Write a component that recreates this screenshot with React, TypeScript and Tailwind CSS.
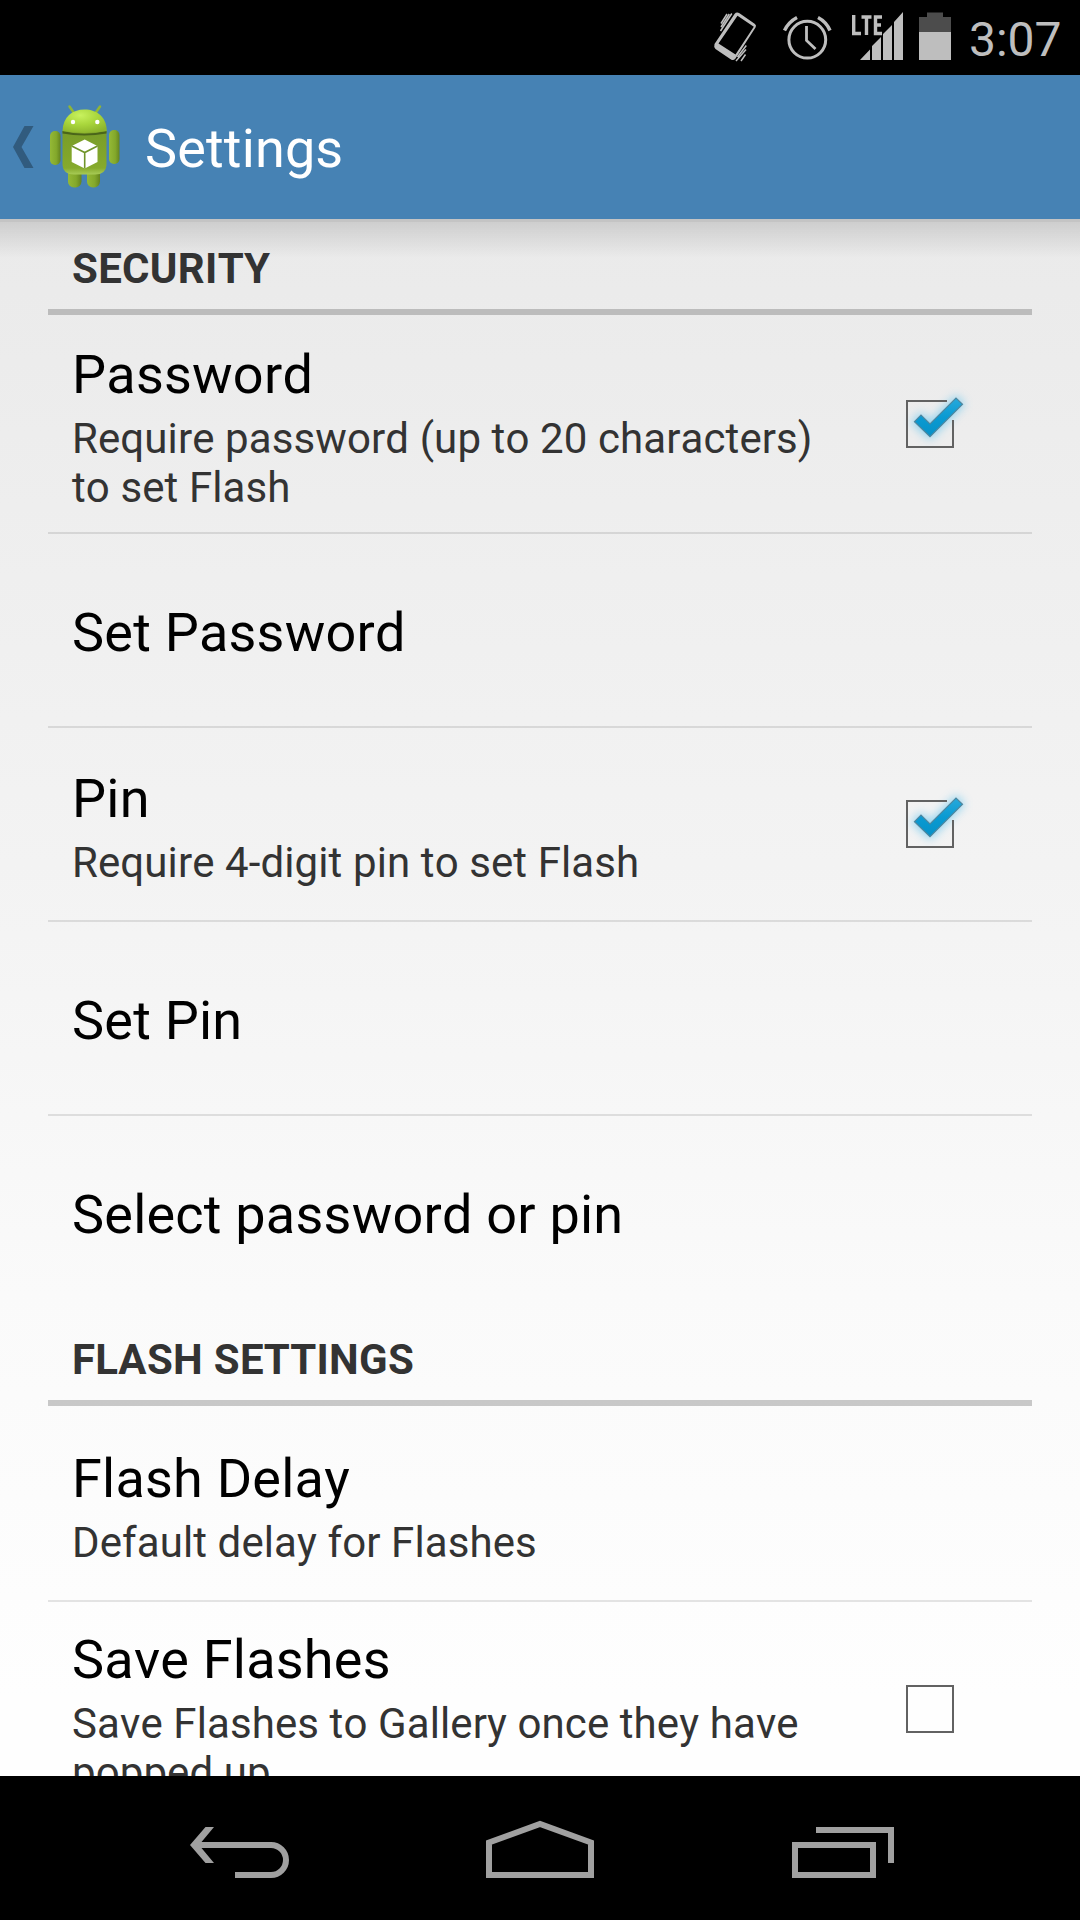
import React from 'react';

function StatusBar() {
  return (
    <div className="flex h-[75px] shrink-0 items-start bg-black text-[#bebebe]">
      <svg className="ml-[700px] h-[75px] w-[260px] shrink-0" viewBox="700 0 260 75" fill="none" stroke="#bebebe">
        <path
          d="M739.500 13.200L755 24Q756.800 25.500 755.500 27.500L735.500 58.500Q733.500 61 731 59.500L715.500 49Q713.500 47 714.500 44L734.500 14Q736.500 11.500 739.500 13.200ZM737.500 15.800L718.500 43.500L735.500 54.500L753.800 26.800Z"
          fill="#bebebe"
          fillRule="evenodd"
          stroke="none"
        />
        <path d="M721 23.500L727 14M720.500 31L731.800 13.500M721 27L729.300 14M737.500 57L746.300 45.500M736 61L746 49.500M741 61L745.500 54.500" strokeWidth="1.500" />
        <circle cx="807.300" cy="39.700" r="18.400" strokeWidth="3" />
        <path d="M784.500 30.500Q788.500 22 797 17.500M818 17.500Q826.500 22 830 30.500" strokeWidth="3.400" />
        <path d="M806.500 26V40.500L815.500 49" strokeWidth="2.800" />
        <path d="M860 60L870 49.500V60ZM872 60V46L881 37V60ZM883 60V34L892 25V60ZM894 60V22L903 12V60Z" fill="#bebebe" stroke="none" />
        <path d="M853.700 15V33.500H861M861.500 17H871.500M866.500 17V35M882 17H875.500V33.500H882M875.500 25H881" strokeWidth="3.400" />
        <path d="M919 32V17H927V12.500H943V17H951V32Z" fill="#4c4c4c" stroke="none" />
        <path d="M919 32H951V60H919Z" fill="#bebebe" stroke="none" />
      </svg>
      <span className="ml-[9px] mt-[12px] text-[48px] leading-[56px]">3:07</span>
    </div>
  );
}

function AndroidLogo() {
  return (
    <svg className="h-[90px] w-[80px]" viewBox="45 100 80 90">
      <defs>
        <radialGradient id="head" cx="0.4" cy="0.25" r="0.8">
          <stop offset="0" stopColor="#c8f25e" />
          <stop offset="0.5" stopColor="#a9d63c" />
          <stop offset="1" stopColor="#8cb32c" />
        </radialGradient>
        <linearGradient id="torso" x1="0" y1="0" x2="0" y2="1">
          <stop offset="0" stopColor="#789c28" />
          <stop offset="0.85" stopColor="#86aa2c" />
          <stop offset="1" stopColor="#a8cb56" />
        </linearGradient>
        <linearGradient id="limb" x1="0" y1="0" x2="1" y2="0">
          <stop offset="0" stopColor="#94b936" />
          <stop offset="0.6" stopColor="#83a82b" />
          <stop offset="1" stopColor="#65841f" />
        </linearGradient>
      </defs>
      <path d="M69.500 106.500L74 113M100 106.500L95.500 113" stroke="#8fb536" strokeWidth="2.500" strokeLinecap="round" />
      <rect x="68" y="168" width="13.500" height="19.500" rx="6" fill="url(#limb)" />
      <rect x="87" y="168" width="13" height="19.500" rx="6" fill="url(#limb)" />
      <rect x="50" y="131" width="10.500" height="34" rx="5" fill="url(#limb)" />
      <rect x="109" y="130" width="10.500" height="34" rx="5" fill="url(#limb)" />
      <path d="M62.500 131H106.500V165Q106 174.500 95 174.500H74Q63 174.500 62.500 165Z" fill="url(#torso)" />
      <path d="M62.500 131Q84 136.500 106.500 131V133.500Q84 137.500 62.500 133.500Z" fill="#4a651a" />
      <path d="M62.500 131C63 117 72 109.500 84.500 109.500S106.500 117 106.800 131Q84 135 62.500 131Z" fill="url(#head)" />
      <circle cx="73" cy="122" r="2.200" fill="#fff" />
      <circle cx="97.300" cy="122" r="2.200" fill="#fff" />
      <path d="M84.700 139.500L97.500 146V162L84.700 168.500L71.700 162V146Z" fill="#fff" />
      <path d="M71.700 146L84.700 152.500L97.500 146M84.700 152.500V168.500" stroke="#70942a" strokeWidth="1.600" fill="none" />
    </svg>
  );
}

function ActionBar() {
  return (
    <div className="flex h-[144px] shrink-0 items-start bg-[#4682b4]">
      <svg className="ml-[13px] mt-[51px] h-[42px] w-[21px]" viewBox="0 0 21 42">
        <path d="M11.500 0H20.500L8.500 21L20.500 42H11.500L0 21Z" fill="#315b7e" />
      </svg>
      <div className="ml-[11px] mt-[25px]"><AndroidLogo /></div>
      <h1 className="ml-[20px] mt-[42px] text-[54px] leading-[64px] tracking-[0.15px] text-white">Settings</h1>
    </div>
  );
}

function Checkbox({ checked }: { checked?: boolean }) {
  return (
    <svg className="h-[96px] w-[96px]" viewBox="0 0 96 96" fill="none">
      {checked ? (
        <>
          <defs>
            <filter id="glow" x="-50%" y="-50%" width="200%" height="200%">
              <feGaussianBlur stdDeviation="5" />
            </filter>
            <linearGradient id="tick" x1="0" y1="0" x2="0" y2="1">
              <stop offset="0" stopColor="#27a9dc" />
              <stop offset="0.5" stopColor="#0a9ad2" />
              <stop offset="1" stopColor="#0790c6" />
            </linearGradient>
          </defs>
          <path d="M31 46L41 36L50 45L76 19L85 28L50 64Z" fill="#70c8ee" opacity="0.75" filter="url(#glow)" />
          <path d="M67 25H27V71H73V44" stroke="#626262" strokeWidth="2" />
          <path d="M34.500 45.700L41 39L50 48L76 22L82.500 28.200L50 60.700Z" fill="url(#tick)" stroke="#4f879f" strokeWidth="1.200" />
        </>
      ) : (
        <path d="M27 25H73V71H27Z" stroke="#626262" strokeWidth="2" />
      )}
    </svg>
  );
}

function SectionHeader({ children }: { children: React.ReactNode }) {
  return (
    <h2 className="h-[96px] shrink-0 border-b-[6px] border-black/20 px-[24px] pt-[25px] text-[42px] leading-[50px] font-bold tracking-[0.3px] text-[#333]">
      {children}
    </h2>
  );
}

interface RowProps {
  title: string;
  summary?: React.ReactNode;
  checked?: boolean;
  height: string;
  textTop: string;
  boxTop?: string;
  last?: boolean;
}

function Row({ title, summary, checked, height, textTop, boxTop, last }: RowProps) {
  return (
    <div className={`flex shrink-0 items-start justify-between ${height} ${last ? '' : 'border-b-2 border-black/10'}`}>
      <div className={`pl-[24px] whitespace-nowrap ${textTop}`}>
        <div className="text-[54px] leading-[64px] tracking-[0.22px] text-black">{title}</div>
        {summary && <div className="mt-[7px] text-[42px] leading-[49px] tracking-[0.1px] text-[#333]">{summary}</div>}
      </div>
      {boxTop && <div className={`pr-[56px] ${boxTop}`}><Checkbox checked={checked} /></div>}
    </div>
  );
}

function NavigationBar() {
  return (
    <div className="flex h-[144px] shrink-0 items-center justify-between bg-black px-[180px]">
      <svg className="h-[144px] w-[120px]" viewBox="180 1776 120 144" fill="none">
        <path d="M199 1845H271A15 15 0 0 1 271 1875H235" stroke="#a0a0a0" strokeWidth="6" />
        <path d="M190 1845L205.500 1827H214L199 1845L214 1863H205.500Z" fill="#a0a0a0" />
      </svg>
      <svg className="h-[144px] w-[120px]" viewBox="480 1776 120 144" fill="none" stroke="#a0a0a0" strokeWidth="6">
        <path d="M489 1842.500L540 1824L591 1842.500V1875H489Z" />
      </svg>
      <svg className="h-[144px] w-[120px]" viewBox="780 1776 120 144" fill="none" stroke="#a0a0a0" strokeWidth="6">
        <path d="M795 1845H873V1875H795ZM816 1830H891V1863" />
      </svg>
    </div>
  );
}

export default function App() {
  return (
    <div className="flex h-[1920px] w-[1080px] flex-col overflow-hidden bg-white font-[Roboto,sans-serif] [font-kerning:none]">
      <StatusBar />
      <ActionBar />
      <main className="relative flex min-h-0 flex-1 flex-col overflow-hidden bg-[linear-gradient(#eaeaea,#f4f4f4_46%,#fafafa_69%,#fefefe_95%)] px-[48px]">
        <div className="absolute inset-x-0 top-0">
          <div className="h-[3px] bg-black/16" />
          <div className="h-[36px] bg-linear-to-b from-black/12 to-transparent" />
        </div>
        <SectionHeader>SECURITY</SectionHeader>
        <Row title="Password" summary={<>Require password (up to 20 characters)<br />to set Flash</>} checked height="h-[219px]" textTop="pt-[28px]" boxTop="pt-[61px]" />
        <Row title="Set Password" height="h-[194px]" textTop="pt-[67px]" />
        <Row title="Pin" summary="Require 4-digit pin to set Flash" checked height="h-[194px]" textTop="pt-[39px]" boxTop="pt-[48px]" />
        <Row title="Set Pin" height="h-[194px]" textTop="pt-[67px]" />
        <Row title="Select password or pin" height="h-[194px]" textTop="pt-[67px]" last />
        <SectionHeader>FLASH SETTINGS</SectionHeader>
        <Row title="Flash Delay" summary="Default delay for Flashes" height="h-[196px]" textTop="pt-[41px]" />
        <Row title="Save Flashes" summary={<>Save Flashes to Gallery once they have<br />popped up</>} height="h-[219px]" textTop="pt-[26px]" boxTop="pt-[59px]" />
      </main>
      <NavigationBar />
    </div>
  );
}
